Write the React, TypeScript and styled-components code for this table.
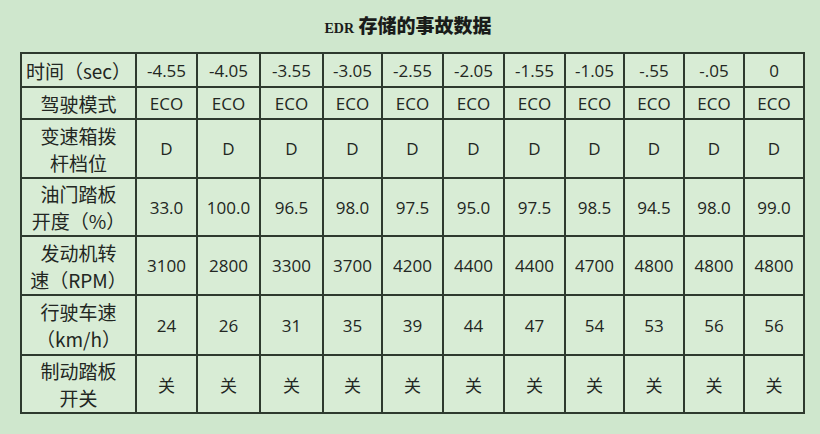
import React from "react";
import styled, { createGlobalStyle } from "styled-components";

const GlobalStyle = createGlobalStyle`
  html, body {
    margin: 0;
    padding: 0;
    background: #cfe7cd;
  }
`;

const columns = [115, 61, 63, 63, 59, 61, 61, 61, 59, 60, 60, 60];

const rows: { label: string[]; height: number; values: string[] }[] = [
  {
    label: ["时间（sec）"],
    height: 34,
    values: ["-4.55", "-4.05", "-3.55", "-3.05", "-2.55", "-2.05", "-1.55", "-1.05", "-.55", "-.05", "0"],
  },
  {
    label: ["驾驶模式"],
    height: 32,
    values: Array(11).fill("ECO"),
  },
  {
    label: ["变速箱拨", "杆档位"],
    height: 59,
    values: Array(11).fill("D"),
  },
  {
    label: ["油门踏板", "开度（%）"],
    height: 58,
    values: ["33.0", "100.0", "96.5", "98.0", "97.5", "95.0", "97.5", "98.5", "94.5", "98.0", "99.0"],
  },
  {
    label: ["发动机转", "速（RPM）"],
    height: 59,
    values: ["3100", "2800", "3300", "3700", "4200", "4400", "4400", "4700", "4800", "4800", "4800"],
  },
  {
    label: ["行驶车速", "（km/h）"],
    height: 60,
    values: ["24", "26", "31", "35", "39", "44", "47", "54", "53", "56", "56"],
  },
  {
    label: ["制动踏板", "开关"],
    height: 58,
    values: Array(11).fill("关"),
  },
];

export default function App() {
  return (
    <>
      <GlobalStyle />
      <Page>
        <Title>
          <Latin>EDR</Latin> 存储的事故数据
        </Title>
        <Table>
          <colgroup>
            {columns.map((w, i) => (
              <col key={i} style={{ width: w }} />
            ))}
          </colgroup>
          <tbody>
            {rows.map((row) => (
              <tr key={row.label.join("")} style={{ height: row.height }}>
                <LabelCell>
                  {row.label.map((line) => (
                    <div key={line}>{line}</div>
                  ))}
                </LabelCell>
                {row.values.map((v, i) => (
                  <ValueCell key={i}>{v}</ValueCell>
                ))}
              </tr>
            ))}
          </tbody>
        </Table>
      </Page>
    </>
  );
}

const Page = styled.div`
  width: 820px;
  height: 434px;
  padding-top: 13px;
  box-sizing: border-box;
  background: #cfe7cd;
  overflow: hidden;
`;

const Title = styled.h1`
  margin: 0 0 15px 0;
  height: 24px;
  line-height: 24px;
  text-align: center;
  font-family: "Noto Sans CJK SC", sans-serif;
  font-size: 19px;
  font-weight: 900;
  color: #1a1c1a;
  padding-right: 4px;
`;

const Latin = styled.span`
  font-family: "Liberation Serif", serif;
  font-size: 14px;
  font-weight: 700;
`;

const Table = styled.table`
  margin-left: 20px;
  width: 784px;
  table-layout: fixed;
  border-collapse: collapse;
  background: #d8ecd5;
  color: #262a26;
`;

const Cell = styled.td`
  border: 2px solid #2e3a2e;
  padding: 0;
  text-align: center;
  vertical-align: middle;
`;

const LabelCell = styled(Cell)`
  font-family: "Noto Sans CJK SC", sans-serif;
  font-size: 19px;
  font-weight: 400;
  line-height: 27px;
  color: #222622;
`;

const ValueCell = styled(Cell)`
  font-family: "Open Sans", "Noto Sans CJK SC", sans-serif;
  font-size: 17px;
  color: #222622;
`;
